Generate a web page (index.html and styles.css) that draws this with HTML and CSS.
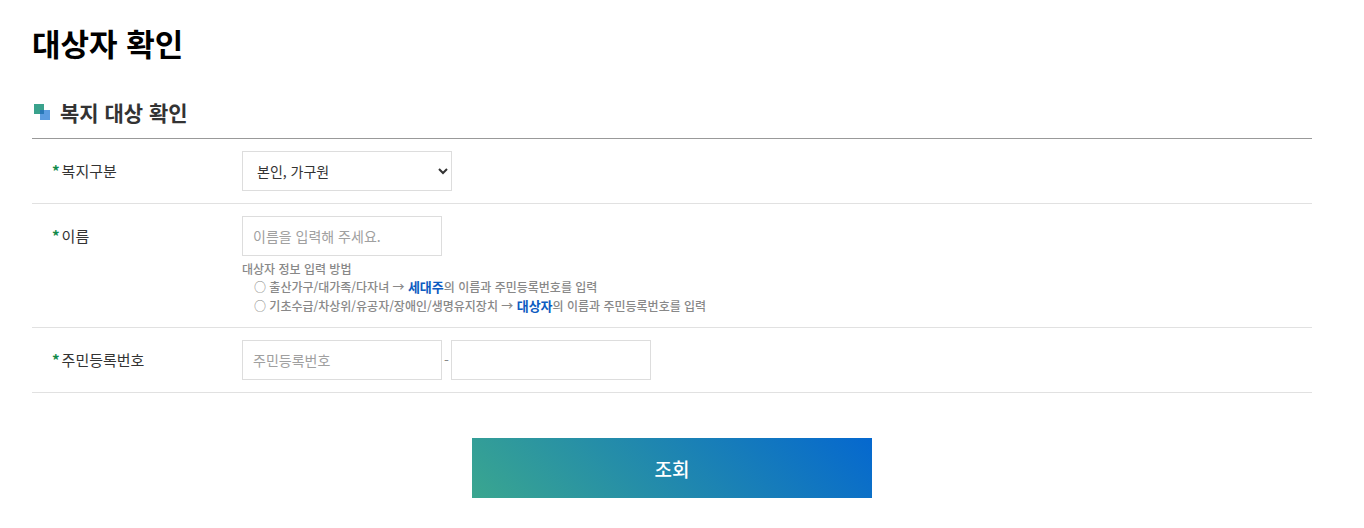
FILE: index.html
```html
<!DOCTYPE html>
<html lang="ko">
<head>
    <meta charset="UTF-8">
    <meta name="viewport" content="width=device-width, initial-scale=1.0">
    <title>대상자 확인</title>
    <link rel="stylesheet" href="styles.css">
</head>
<body>
    <main class="content">
        <h1 class="page-title">대상자 확인</h1>
        <h2 class="section-title">
            <svg class="section-icon" width="16" height="16" viewBox="0 0 16 16" aria-hidden="true">
                <rect width="10" height="10" fill="#3aa28c"/>
                <rect x="6" y="6" width="10" height="10" fill="#5b9ce0"/>
                <rect x="6" y="6" width="4" height="4" fill="#2879b8"/>
            </svg>
            복지 대상 확인
        </h2>
        <form>
            <div class="form-table">
                <div class="row">
                    <label class="row-label" for="welfareType"><span class="required">*</span>복지구분</label>
                    <div class="row-field">
                        <select id="welfareType" class="select">
                            <option>본인, 가구원</option>
                        </select>
                    </div>
                </div>
                <div class="row">
                    <label class="row-label" for="userName"><span class="required">*</span>이름</label>
                    <div class="row-field">
                        <input type="text" id="userName" class="input" placeholder="이름을 입력해 주세요.">
                        <div class="guide">
                            <p>대상자 정보 입력 방법</p>
                            <ul class="guide-list">
                                <li>○ 출산가구/대가족/다자녀 → <strong>세대주</strong>의 이름과 주민등록번호를 입력</li>
                                <li>○ 기초수급/차상위/유공자/장애인/생명유지장치 → <strong>대상자</strong>의 이름과 주민등록번호를 입력</li>
                            </ul>
                        </div>
                    </div>
                </div>
                <div class="row">
                    <label class="row-label" for="jumin1"><span class="required">*</span>주민등록번호</label>
                    <div class="row-field jumin">
                        <input type="text" id="jumin1" class="input" placeholder="주민등록번호">
                        <span>-</span>
                        <input type="password" id="jumin2" class="input" aria-label="주민등록번호 뒷자리">
                    </div>
                </div>
            </div>
            <div class="btn-area">
                <button type="button" class="btn-search">조회</button>
            </div>
        </form>
    </main>
</body>
</html>
```
FILE: styles.css
```css
* {
    box-sizing: border-box;
    margin: 0;
    padding: 0;
}
body {
    background-color: #fff;
    color: #333;
    font-family: "Noto Sans CJK KR", sans-serif;
    font-size: 15px;
}
.content {
    padding: 19px 52px 30px 32px;
}
.page-title {
    color: #000;
    font-size: 31px;
    font-weight: 700;
    line-height: 48px;
}
.section-title {
    display: flex;
    align-items: center;
    gap: 10px;
    margin-top: 29px;
    padding-left: 2px;
    font-size: 21px;
    font-weight: 700;
    line-height: 32px;
}
.form-table {
    margin-top: 10px;
    border-top: 1px solid #999;
}
.row {
    display: flex;
    padding: 12px 0;
    border-bottom: 1px solid #e1e1e1;
}
.row-label {
    display: flex;
    flex: 0 0 210px;
    gap: 2px;
    padding-left: 20px;
    line-height: 40px;
}
.required {
    color: #128a4a;
    font-weight: 700;
}
.row-field {
    flex: 1;
    min-width: 0;
}
.input,
.select {
    display: block;
    height: 40px;
    border: 1px solid #ddd;
    border-radius: 0;
    background-color: #fff;
    color: #333;
    font-family: inherit;
    font-size: 14px;
}
.input {
    width: 200px;
    padding: 0 10px;
}
.input::placeholder {
    color: #a0a0a0;
}
.select {
    width: 210px;
    padding: 0 10px;
}
.guide {
    margin-top: 4px;
    color: #888;
    font-size: 12px;
    font-weight: 500;
    line-height: 18px;
}
.guide-list {
    padding-left: 12px;
    list-style: none;
}
.guide-list li + li {
    margin-top: 1px;
}
.guide-list strong {
    color: #0d5bc1;
    font-size: 13px;
    font-weight: 700;
}
/* 주민등록번호 앞/뒤 자리 */
.jumin {
    display: flex;
    align-items: center;
    gap: 2px;
    color: #888;
    font-size: 14px;
}
.btn-area {
    display: flex;
    justify-content: center;
    margin-top: 45px;
}
.btn-search {
    width: 400px;
    height: 60px;
    border: 0;
    background: linear-gradient(45deg, #3aa68f, #0568cf);
    color: #fff;
    font-family: inherit;
    font-size: 19px;
    font-weight: 500;
    cursor: pointer;
}
```
